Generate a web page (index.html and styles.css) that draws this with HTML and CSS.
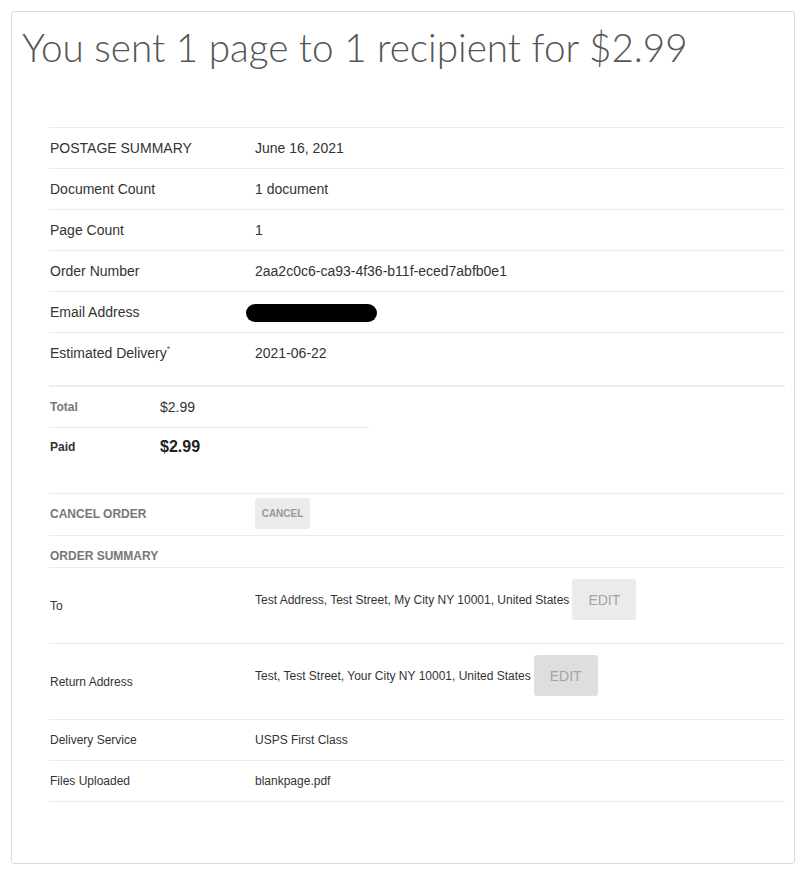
FILE: index.html
```html
<!DOCTYPE html>
<html lang="en">
<head>
<meta charset="utf-8">
<title>Order summary</title>
<link rel="stylesheet" href="styles.css">
</head>
<body>
<div class="card">
  <h1 class="title">You sent 1 page to 1 recipient for $2.99</h1>

  <div class="summary">
    <div class="row">
      <div class="label">POSTAGE SUMMARY</div>
      <div class="value">June 16, 2021</div>
    </div>
    <div class="row">
      <div class="label">Document Count</div>
      <div class="value">1 document</div>
    </div>
    <div class="row">
      <div class="label">Page Count</div>
      <div class="value">1</div>
    </div>
    <div class="row">
      <div class="label">Order Number</div>
      <div class="value">2aa2c0c6-ca93-4f36-b11f-eced7abfb0e1</div>
    </div>
    <div class="row">
      <div class="label">Email Address</div>
      <div class="value"><span class="redacted"></span></div>
    </div>
    <div class="row">
      <div class="label">Estimated Delivery<sup class="req">*</sup></div>
      <div class="value">2021-06-22</div>
    </div>

    <div class="totals">
      <div class="totals-inner">
        <div class="trow">
          <div class="tlabel">Total</div>
          <div class="tvalue">$2.99</div>
        </div>
        <div class="trow paid">
          <div class="tlabel">Paid</div>
          <div class="tvalue">$2.99</div>
        </div>
      </div>
    </div>

    <div class="row cancel-row">
      <div class="label heading">CANCEL ORDER</div>
      <div class="value"><button class="btn-cancel" type="button">CANCEL</button></div>
    </div>
    <div class="row order-head">
      <div class="label heading">ORDER SUMMARY</div>
      <div class="value"></div>
    </div>
    <div class="row tall">
      <div class="label small">To</div>
      <div class="value small addr">Test Address, Test Street, My City NY 10001, United States <button class="btn-edit" type="button">EDIT</button></div>
    </div>
    <div class="row tall">
      <div class="label small">Return Address</div>
      <div class="value small addr">Test, Test Street, Your City NY 10001, United States <button class="btn-edit active" type="button">EDIT</button></div>
    </div>
    <div class="row">
      <div class="label small">Delivery Service</div>
      <div class="value small">USPS First Class</div>
    </div>
    <div class="row last">
      <div class="label small">Files Uploaded</div>
      <div class="value small">blankpage.pdf</div>
    </div>
  </div>
</div>
</body>
</html>
```

FILE: styles.css
```css
html, body {
  margin: 0;
  padding: 0;
  background: #fff;
}

body {
  font-family: "Liberation Sans", Arial, sans-serif;
  color: #333;
}

.card {
  box-sizing: border-box;
  width: 784px;
  height: 853px;
  margin: 11px 0 0 11px;
  border: 1px solid #dcdcdc;
  border-radius: 3px;
}

.title {
  margin: 10px 0 0 10px;
  font-family: Lato, "Open Sans", sans-serif;
  font-weight: 300;
  font-size: 38.7px;
  line-height: 50px;
  color: #555;
}

.summary {
  margin: 55px 9px 0 37px;
}

.row {
  display: grid;
  grid-template-columns: 206px 1fr;
  align-items: center;
  height: 41px;
  box-sizing: border-box;
  border-top: 1px solid #e9ecef;
  padding-bottom: 1px;
  font-size: 14px;
}

.row.last {
  height: 42px;
  border-bottom: 1px solid #e9ecef;
}

.label {
  padding-left: 1px;
}

.small {
  font-size: 12px;
}

.heading {
  font-size: 12px;
  font-weight: bold;
  color: #777;
}

.req {
  color: #c0392b;
  font-size: 9px;
  vertical-align: 6px;
  line-height: 0;
}

.redacted {
  display: inline-block;
  width: 131px;
  height: 18px;
  margin-left: -9px;
  margin-top: 2px;
  background: #000;
  border-radius: 9px;
  vertical-align: middle;
}

.totals {
  margin-top: 12px;
  border-top: 2px solid #eceef0;
  padding-bottom: 25px;
}

.totals-inner {
  width: 320px;
}

.trow {
  display: grid;
  grid-template-columns: 111px 1fr;
  align-items: center;
  height: 40px;
  padding-bottom: 1px;
  box-sizing: border-box;
  font-size: 14px;
}

.trow + .trow {
  height: 41px;
  border-top: 1px solid #e9ecef;
  padding-bottom: 2px;
}

.tlabel {
  padding-left: 1px;
  font-size: 12px;
  font-weight: bold;
  color: #777;
}

.paid .tlabel {
  color: #333;
}

.paid .tvalue {
  font-size: 16px;
  font-weight: bold;
  color: #222;
}

.row.cancel-row {
  height: 42px;
  padding-bottom: 2px;
}

.btn-cancel {
  display: block;
  width: 55px;
  height: 31px;
  padding: 0;
  border: none;
  border-radius: 3px;
  background: #ebebeb;
  color: #999;
  font-family: "Liberation Sans", Arial, sans-serif;
  font-size: 10px;
  font-weight: bold;
}

.row.order-head {
  height: 32px;
  align-items: end;
  padding-bottom: 4px;
}

.row.tall {
  height: 76px;
  align-items: center;
  padding-bottom: 0;
}

.addr {
  display: flex;
  align-items: center;
  gap: 3px;
  align-self: start;
  padding-top: 11px;
}

.btn-edit {
  width: 64px;
  height: 41px;
  padding: 0;
  border: none;
  border-radius: 3px;
  background: #ebebeb;
  color: #a3a3a3;
  font-family: "Liberation Sans", Arial, sans-serif;
  font-size: 14px;
}

.btn-edit.active {
  background: #dedede;
}
```
